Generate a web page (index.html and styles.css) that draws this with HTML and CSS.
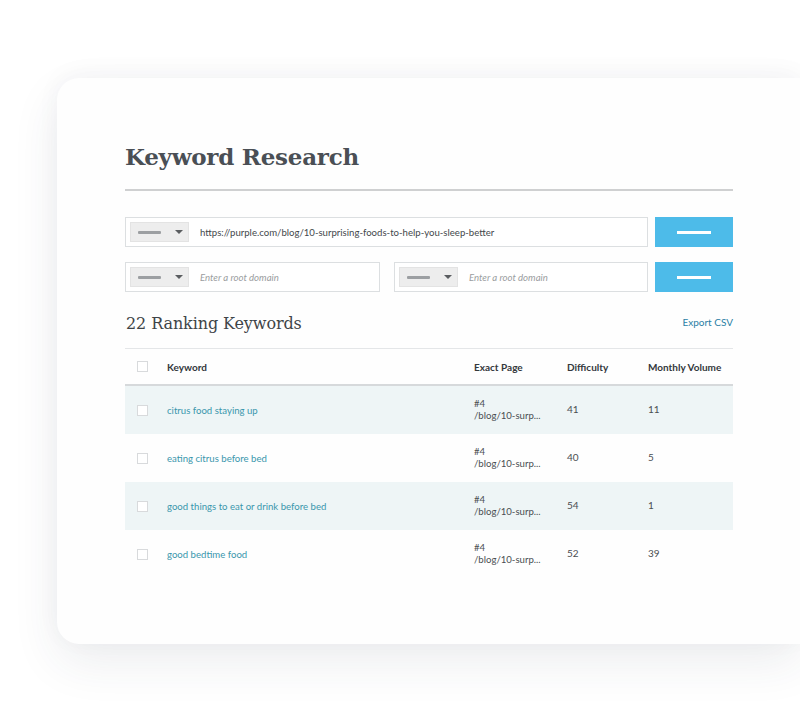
FILE: index.html
```html
<!DOCTYPE html>
<html>
<head>
<meta charset="utf-8">
<link rel="stylesheet" href="styles.css">
</head>
<body>
<div class="stage">
  <div class="card">
    <h1 class="title">Keyword Research</h1>
    <div class="rule"></div>

    <div class="form-row">
      <div class="field field-wide">
        <div class="select"><span class="sel-dash"></span><span class="caret"></span></div>
        <span class="value">https://purple.com/blog/10-surprising-foods-to-help-you-sleep-better</span>
      </div>
      <div class="btn"><span class="btn-dash"></span></div>
    </div>

    <div class="form-row">
      <div class="field field-half">
        <div class="select"><span class="sel-dash"></span><span class="caret"></span></div>
        <span class="placeholder">Enter a root domain</span>
      </div>
      <div class="field field-half field-second">
        <div class="select"><span class="sel-dash"></span><span class="caret"></span></div>
        <span class="placeholder">Enter a root domain</span>
      </div>
      <div class="btn"><span class="btn-dash"></span></div>
    </div>

    <div class="section-head">
      <h2 class="subtitle">22 Ranking Keywords</h2>
      <span class="export">Export CSV</span>
    </div>

    <div class="table">
      <div class="trow thead">
        <div class="cell"><span class="check"></span></div>
        <div class="cell">Keyword</div>
        <div class="cell">Exact Page</div>
        <div class="cell">Difficulty</div>
        <div class="cell">Monthly Volume</div>
      </div>
      <div class="trow shaded">
        <div class="cell"><span class="check"></span></div>
        <div class="cell kw">citrus food staying up</div>
        <div class="cell page">#4<br>/blog/10-surp...</div>
        <div class="cell num">41</div>
        <div class="cell num">11</div>
      </div>
      <div class="trow">
        <div class="cell"><span class="check"></span></div>
        <div class="cell kw">eating citrus before bed</div>
        <div class="cell page">#4<br>/blog/10-surp...</div>
        <div class="cell num">40</div>
        <div class="cell num">5</div>
      </div>
      <div class="trow shaded">
        <div class="cell"><span class="check"></span></div>
        <div class="cell kw">good things to eat or drink before bed</div>
        <div class="cell page">#4<br>/blog/10-surp...</div>
        <div class="cell num">54</div>
        <div class="cell num">1</div>
      </div>
      <div class="trow">
        <div class="cell"><span class="check"></span></div>
        <div class="cell kw">good bedtime food</div>
        <div class="cell page">#4<br>/blog/10-surp...</div>
        <div class="cell num">52</div>
        <div class="cell num">39</div>
      </div>
    </div>
  </div>
</div>
</body>
</html>
```

FILE: styles.css
```css
html, body {
  margin: 0;
  padding: 0;
  background: #ffffff;
  overflow: hidden;
}

body {
  width: 800px;
  height: 724px;
  font-family: "Lato", "Liberation Sans", sans-serif;
}

.stage {
  width: 800px;
  height: 724px;
  box-sizing: border-box;
  padding-top: 78px;
  padding-left: 57px;
  overflow: hidden;
}

.card {
  width: 100%;
  height: 566px;
  box-sizing: border-box;
  background: #fefefe;
  border-radius: 22px 0 0 22px;
  box-shadow: 0 18px 48px rgba(40, 55, 80, 0.09), 0 -4px 24px rgba(40, 55, 80, 0.04);
  padding: 63px 0 0 68px;
}

.title {
  margin: 0;
  font-family: "DejaVu Serif", serif;
  font-weight: bold;
  font-size: 23px;
  line-height: 32px;
  color: #4a4f55;
  letter-spacing: -0.25px;
}

.rule {
  width: 608px;
  height: 2px;
  background: #cfd0d1;
  margin-top: 16px;
  margin-bottom: 26px;
}

.form-row {
  display: flex;
  gap: 7px;
  width: 608px;
  margin-bottom: 15px;
}

.field {
  height: 30px;
  box-sizing: border-box;
  border: 1px solid #dcdfe1;
  background: #ffffff;
  display: flex;
  align-items: center;
  padding-left: 4px;
}

.field-wide {
  width: 523px;
}

.field-half {
  width: 255px;
}

.field-second {
  margin-left: 7px;
  width: 254px;
}

.select {
  width: 59px;
  height: 20px;
  box-sizing: border-box;
  background: #ededed;
  border: 1px solid #e3e3e3;
  display: flex;
  align-items: center;
  padding-left: 7px;
  margin-right: 11px;
  flex: none;
}

.sel-dash {
  width: 23px;
  height: 3px;
  background: #9c9fa2;
  border-radius: 1px;
}

.caret {
  width: 0;
  height: 0;
  border-left: 4px solid transparent;
  border-right: 4px solid transparent;
  border-top: 4px solid #5a5d60;
  margin-left: 14px;
}

.value {
  font-size: 9.6px;
  color: #44484c;
  white-space: nowrap;
}

.placeholder {
  font-size: 9.6px;
  font-style: italic;
  color: #9a9da0;
  white-space: nowrap;
}

.btn {
  width: 78px;
  height: 30px;
  background: #4dbbe9;
  display: flex;
  align-items: center;
  justify-content: center;
  flex: none;
}

.btn-dash {
  width: 34px;
  height: 3px;
  background: #ffffff;
}

.section-head {
  width: 608px;
  display: flex;
  justify-content: space-between;
  align-items: center;
  margin-top: 20px;
}

.subtitle {
  margin: 0;
  padding-left: 1px;
  font-family: "DejaVu Serif", serif;
  font-weight: normal;
  font-size: 16px;
  line-height: 24px;
  color: #3f4448;
  letter-spacing: -0.1px;
}

.export {
  font-size: 10px;
  color: #2b7fa5;
  margin-top: -4px;
}

.table {
  width: 608px;
  margin-top: 12px;
  border-top: 1px solid #e4e6e8;
}

.trow {
  display: grid;
  grid-template-columns: 42px 307px 93px 81px 1fr;
  align-items: center;
  height: 48px;
  font-size: 9.6px;
  color: #4a4e52;
}

.trow.thead {
  height: 35px;
  border-bottom: 2px solid #d6d9db;
  font-size: 10px;
  font-weight: bold;
  color: #34383c;
}

.trow.shaded {
  background: #eef5f6;
}

.cell {
  white-space: nowrap;
}

.cell:first-child {
  padding-left: 12px;
  display: flex;
  align-items: center;
}

.check {
  width: 11px;
  height: 11px;
  box-sizing: border-box;
  border: 1px solid #d8dadc;
  background: #ffffff;
}

.kw {
  color: #3a97ad;
}

.page {
  line-height: 12px;
  margin-top: -1px;
}

.num {
  font-size: 10px;
  margin-top: -2px;
}
```
